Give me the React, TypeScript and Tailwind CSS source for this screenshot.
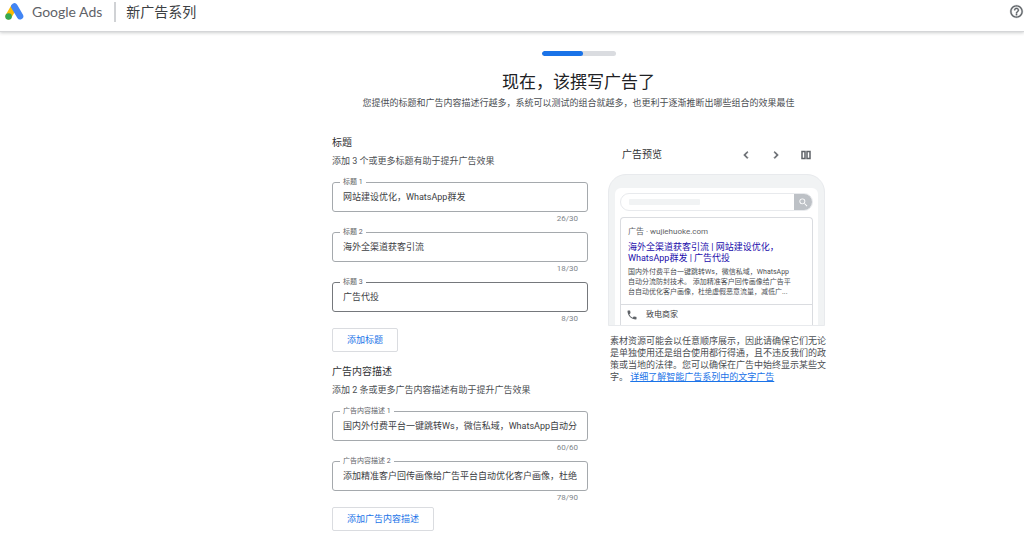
import { useId, useState } from "react";

type FieldProps = {
  label: string;
  initial: string;
  counter: string;
  active?: boolean;
};

function Field({ label, initial, counter, active = false }: FieldProps) {
  const id = useId();
  const [value, setValue] = useState(initial);
  return (
    <div className="relative">
      <label
        htmlFor={id}
        className="absolute -top-[5px] left-2 bg-white px-[3px] text-[7px] leading-[10px] text-[#5f6368]"
      >
        {label}
      </label>
      <input
        id={id}
        type="text"
        value={value}
        onChange={(e) => setValue(e.target.value)}
        className={`block h-[30px] w-full rounded-[3px] border px-[10px] pb-[2px] text-[9px] text-[#3c4043] outline-none ${
          active ? "border-[#75787c]" : "border-[#a5a9ad]"
        }`}
      />
      <p className="mt-px pr-[10px] text-right text-[8px] leading-3 text-[#80868b]">{counter}</p>
    </div>
  );
}

type SectionProps = {
  title: string;
  hint: string;
  fields: FieldProps[];
  action: string;
};

function Section({ title, hint, fields, action }: SectionProps) {
  return (
    <section>
      <h2 className="text-[10px] leading-[14px] text-[#303134]">{title}</h2>
      <p className="mt-[5px] text-[9px] leading-3 text-[#4b4e52]">{hint}</p>
      <div className="mt-[15px] flex flex-col gap-[7px]">
        {fields.map((field) => (
          <Field key={field.label} {...field} />
        ))}
      </div>
      <button
        type="button"
        className="mt-[3px] h-6 rounded-[2px] border border-[#dadce0] px-[14px] pt-[2px] text-[9px] text-[#1a73e8]"
      >
        {action}
      </button>
    </section>
  );
}

function AdsLogo() {
  return (
    <svg viewBox="0 0 192 172" className="h-[17px] w-[19px]" aria-hidden="true">
      <path
        fill="#fbbc04"
        d="M65 21 8 118a32 32 0 0 0 56 31l57-96z"
      />
      <path
        fill="#4285f4"
        d="M66 52a33 33 0 0 1 57-34l59 101a33 33 0 0 1-57 33z"
      />
      <circle cx="36" cy="136" r="33" fill="#34a853" />
    </svg>
  );
}

function PreviewToolbar() {
  const button = "flex size-5 items-center justify-center text-[#5f6368]";
  return (
    <div className="flex h-[38px] items-center pl-[14px] pr-[9px]">
      <h2 className="flex-1 text-[10px] leading-[14px] text-[#303134]">广告预览</h2>
      <div className="flex gap-[10px]">
        <button type="button" aria-label="上一个" className={button}>
          <svg viewBox="0 0 24 24" className="size-[14px]" fill="currentColor">
            <path d="M15.41 7.41 14 6l-6 6 6 6 1.41-1.41L10.83 12z" stroke="currentColor" />
          </svg>
        </button>
        <button type="button" aria-label="下一个" className={button}>
          <svg viewBox="0 0 24 24" className="size-[14px]" fill="currentColor">
            <path d="M10 6 8.59 7.41 13.17 12l-4.58 4.59L10 18l6-6z" stroke="currentColor" />
          </svg>
        </button>
        <button type="button" aria-label="并排显示" className={button}>
          <svg viewBox="0 0 10 10" className="size-[10px]" fill="none" stroke="currentColor">
            <path d="M1 1.5h3v7H1zM6 1.5h3v7H6z" strokeWidth="1.5" />
          </svg>
        </button>
      </div>
    </div>
  );
}

function PhonePreview() {
  return (
    <div className="rounded-t-[18px] border border-[#e8eaed] bg-[#f1f3f4] px-[6px] pt-[13px]">
      <div className="rounded-t-md bg-white px-[5px] pt-[5px]">
        <div className="flex h-[18px] overflow-hidden rounded-full border border-[#e8eaed]">
          <div className="flex flex-1 items-center pl-2">
            <div className="h-[6px] w-[71px] rounded-[1px] bg-[#f1f3f4]" />
          </div>
          <div className="flex w-[18px] items-center justify-center bg-[#bdc1c6]">
            <svg viewBox="0 0 24 24" className="size-[11px]" fill="#fff" aria-hidden="true">
              <path d="M15.5 14h-.79l-.28-.27A6.47 6.47 0 0 0 16 9.5 6.5 6.5 0 1 0 9.5 16c1.61 0 3.09-.59 4.23-1.57l.27.28v.79l5 4.99L20.49 19zm-6 0C7.01 14 5 11.99 5 9.5S7.01 5 9.5 5 14 7.01 14 9.5 11.99 14 9.5 14" />
            </svg>
          </div>
        </div>
        <article className="mt-[6px] rounded-t-[4px] border border-b-0 border-[#dadce0] pt-2">
          <div className="px-[7px]">
            <p className="text-[8px] leading-3 text-[#5f6368]">广告 · wujiehuoke.com</p>
            <h3 className="mt-1 text-[9px] leading-[11px] text-[#1a0dab]">
              海外全渠道获客引流 | 网站建设优化，
              <br />
              WhatsApp群发 | 广告代投
            </h3>
            <p className="mt-[3px] whitespace-nowrap text-[7px] leading-[10px] text-[#4b4e52]">
              国内外付费平台一键跳转Ws，微信私域，WhatsApp
              <br />
              自动分流防封技术。 添加精准客户回传画像给广告平
              <br />
              台自动优化客户画像，杜绝虚假恶意流量，减低广...
            </p>
          </div>
          <div className="mt-[7px] flex h-[21px] items-center gap-2 border-t border-[#dadce0] px-[5px]">
            <svg viewBox="0 0 24 24" className="size-3" fill="#5f6368" aria-hidden="true">
              <path d="M6.62 10.79a15.05 15.05 0 0 0 6.59 6.59l2.2-2.2c.27-.27.67-.36 1.02-.24 1.12.37 2.33.57 3.57.57.55 0 1 .45 1 1V20c0 .55-.45 1-1 1C10.61 21 3 13.39 3 4c0-.55.45-1 1-1h3.5c.55 0 1 .45 1 1 0 1.25.2 2.45.57 3.57.11.35.03.74-.25 1.02z" />
            </svg>
            <span className="text-[8px] text-[#3c4043]">致电商家</span>
          </div>
        </article>
      </div>
    </div>
  );
}

export default function App() {
  return (
    <div className="min-h-screen bg-white font-['Roboto','Noto_Sans_CJK_SC',sans-serif] text-[#3c4043]">
      <header className="flex h-8 items-center border-b border-[#d5d6d8] pb-2 pl-[5px] shadow-[0_1px_3px_rgba(60,64,67,0.25)]">
        <AdsLogo />
        <span className="ml-2 font-['Lato','Noto_Sans_CJK_SC',sans-serif] text-[14px] leading-5 text-[#5f6368]">
          Google Ads
        </span>
        <span className="ml-3 h-5 w-[2px] bg-[#d0d2d5]" />
        <span className="ml-[10px] flex-1 text-[14px] leading-5 text-[#3c4043]">新广告系列</span>
        <button type="button" aria-label="帮助">
          <svg viewBox="0 0 24 24" className="size-[15px]" fill="#5f6368">
            <path stroke="#5f6368" strokeWidth="0.5" d="M11 18h2v-2h-2zm1-16C6.48 2 2 6.48 2 12s4.48 10 10 10 10-4.48 10-10S17.52 2 12 2m0 18c-4.41 0-8-3.59-8-8s3.59-8 8-8 8 3.59 8 8-3.59 8-8 8m0-14c-2.21 0-4 1.79-4 4h2c0-1.1.9-2 2-2s2 .9 2 2c0 2-3 1.75-3 5h2c0-2.25 3-2.5 3-5 0-2.21-1.79-4-4-4" />
          </svg>
        </button>
      </header>

      <main className="flex flex-col items-center pb-4 pl-[133px] pt-[19px]">
        <div className="h-[5px] w-[74px] overflow-hidden rounded-full bg-[#dadce0]">
          <div className="h-full w-[41px] rounded-full bg-[#1a73e8]" />
        </div>
        <h1 className="mt-[14px] text-[17px] leading-6 text-[#202124]">现在，该撰写广告了</h1>
        <p className="mt-[3px] text-[9px] leading-3 text-[#4b4e52]">
          您提供的标题和广告内容描述行越多，系统可以测试的组合就越多，也更利于逐渐推断出哪些组合的效果最佳
        </p>

        <div className="mt-[27px] flex w-full max-w-[493px] items-start gap-5">
          <form
            className="flex min-w-0 flex-1 flex-col gap-[13px]"
            onSubmit={(e) => e.preventDefault()}
          >
            <Section
              title="标题"
              hint="添加 3 个或更多标题有助于提升广告效果"
              fields={[
                { label: "标题 1", initial: "网站建设优化，WhatsApp群发", counter: "26/30" },
                { label: "标题 2", initial: "海外全渠道获客引流", counter: "18/30" },
                { label: "标题 3", initial: "广告代投", counter: "8/30", active: true },
              ]}
              action="添加标题"
            />
            <Section
              title="广告内容描述"
              hint="添加 2 条或更多广告内容描述有助于提升广告效果"
              fields={[
                {
                  label: "广告内容描述 1",
                  initial: "国内外付费平台一键跳转Ws，微信私域，WhatsApp自动分流防封技术。",
                  counter: "60/60",
                },
                {
                  label: "广告内容描述 2",
                  initial: "添加精准客户回传画像给广告平台自动优化客户画像，杜绝虚假恶意流量，减低广告",
                  counter: "78/90",
                },
              ]}
              action="添加广告内容描述"
            />
          </form>

          <aside className="w-[217px] shrink-0">
            <PreviewToolbar />
            <PhonePreview />
            <p className="mt-[9px] whitespace-nowrap pl-[2px] text-[9px] leading-[12px] text-[#4b4e52]">
              素材资源可能会以任意顺序展示，因此请确保它们无论
              <br />
              是单独使用还是组合使用都行得通，且不违反我们的政
              <br />
              策或当地的法律。您可以确保在广告中始终显示某些文
              <br />
              字。{" "}
              <a href="#learn-more" className="text-[#1a73e8] underline">
                详细了解智能广告系列中的文字广告
              </a>
            </p>
          </aside>
        </div>
      </main>
    </div>
  );
}
